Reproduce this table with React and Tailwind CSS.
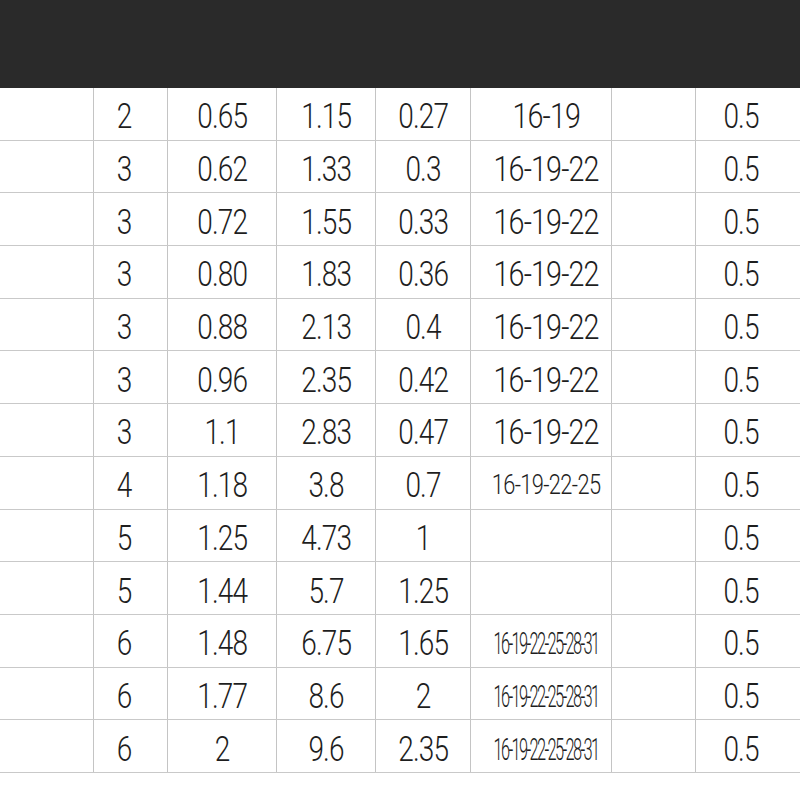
import React from "react";

const rows = [
  ["2", "0.65", "1.15", "0.27", "16-19", "0.5"],
  ["3", "0.62", "1.33", "0.3", "16-19-22", "0.5"],
  ["3", "0.72", "1.55", "0.33", "16-19-22", "0.5"],
  ["3", "0.80", "1.83", "0.36", "16-19-22", "0.5"],
  ["3", "0.88", "2.13", "0.4", "16-19-22", "0.5"],
  ["3", "0.96", "2.35", "0.42", "16-19-22", "0.5"],
  ["3", "1.1", "2.83", "0.47", "16-19-22", "0.5"],
  ["4", "1.18", "3.8", "0.7", "16-19-22-25", "0.5"],
  ["5", "1.25", "4.73", "1", "", "0.5"],
  ["5", "1.44", "5.7", "1.25", "", "0.5"],
  ["6", "1.48", "6.75", "1.65", "16-19-22-25-28-31", "0.5"],
  ["6", "1.77", "8.6", "2", "16-19-22-25-28-31", "0.5"],
  ["6", "2", "9.6", "2.35", "16-19-22-25-28-31", "0.5"],
];

const font = { fontFamily: 'Roboto, "Liberation Sans", sans-serif' };

function Num({ children }) {
  return (
    <span className="inline-block text-[35px] font-light tracking-[-0.03em] scale-x-[0.8] whitespace-nowrap leading-none">
      {children}
    </span>
  );
}

function SizeCell({ text }) {
  if (text.length > 12) {
    return (
      <span className="inline-block text-[31px] font-light tracking-[-0.1em] scale-x-[0.53] whitespace-nowrap leading-none">
        {text}
      </span>
    );
  }
  if (text.length > 9) {
    return (
      <span className="inline-block text-[27px] font-light tracking-[-0.03em] scale-x-[0.81] whitespace-nowrap leading-none">
        {text}
      </span>
    );
  }
  return (
    <span className="inline-block text-[35px] font-light tracking-[-0.03em] scale-x-[0.82] whitespace-nowrap leading-none">
      {text}
    </span>
  );
}

const cell = "border-r border-[#c4c4c4] flex items-center justify-center pt-[6px]";

export default function App() {
  return (
    <div className="w-[800px] h-[800px] bg-white overflow-hidden text-[#1e1e1e]" style={font}>
      <div className="h-[88px] bg-[#2a2a2a]" />
      <div className="flex flex-col">
        {rows.map((r, i) => (
          <div key={i} className="flex h-[52.7px] border-b border-[#c9c9c9]">
            <div className="w-[94px] border-r border-[#c4c4c4]" />
            <div className={`w-[74px] pr-[12px] ${cell}`}><Num>{r[0]}</Num></div>
            <div className={`w-[109px] ${cell}`}><Num>{r[1]}</Num></div>
            <div className={`w-[99px] ${cell}`}><Num>{r[2]}</Num></div>
            <div className={`w-[95px] ${cell}`}><Num>{r[3]}</Num></div>
            <div className={`w-[141px] pl-[10px] ${cell}`}><SizeCell text={r[4]} /></div>
            <div className="w-[84px] border-r border-[#c4c4c4]" />
            <div className="flex-1 flex items-center justify-center pt-[6px] pr-[14px]"><Num>{r[5]}</Num></div>
          </div>
        ))}
      </div>
    </div>
  );
}
